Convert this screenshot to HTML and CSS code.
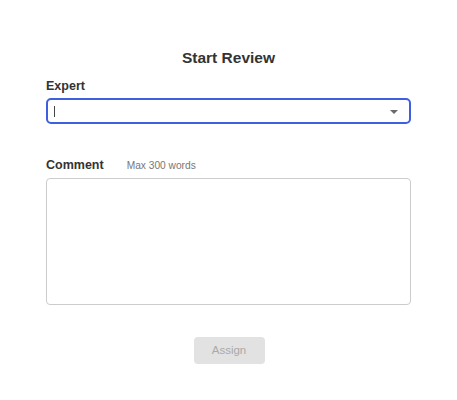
FILE: index.html
```html
<!DOCTYPE html>
<html lang="en">
<head>
<meta charset="utf-8">
<title>Start Review</title>
<link rel="stylesheet" href="styles.css">
</head>
<body>
<main class="dialog">
  <h1 class="title">Start Review</h1>
  <label class="label">Expert</label>
  <div class="select">
    <span class="cursor"></span>
    <svg class="caret" width="8" height="4" viewBox="0 0 8 4"><path d="M0 0 H8 L4 4 Z" fill="#6b6b6b"/></svg>
  </div>
  <div class="comment-row">
    <label class="label">Comment</label>
    <span class="hint">Max 300 words</span>
  </div>
  <div class="textarea"></div>
  <div class="actions">
    <button class="btn" disabled>Assign</button>
  </div>
</main>
</body>
</html>
```
FILE: styles.css
```css
html, body {
  margin: 0;
  padding: 0;
  background: #ffffff;
}
body {
  font-family: "Liberation Sans", Arial, sans-serif;
  color: #333333;
}
.dialog {
  display: flex;
  flex-direction: column;
  padding: 48px 46px 0 46px;
}
.title {
  margin: 0;
  font-size: 15.5px;
  line-height: 20px;
  font-weight: 700;
  text-align: center;
  color: #333333;
}
.label {
  display: block;
  font-size: 12.5px;
  line-height: 16px;
  font-weight: 700;
  color: #333333;
}
.dialog > .label {
  margin-top: 10px;
}
.select {
  margin-top: 4px;
  height: 26px;
  box-sizing: border-box;
  border: 2px solid #3f5fe0;
  border-radius: 5px;
  display: flex;
  align-items: center;
  justify-content: space-between;
  padding: 0 11px 0 6px;
}
.cursor {
  width: 1px;
  height: 11px;
  background: #444444;
}
.caret {
  display: block;
  margin-top: 1px;
}
.comment-row {
  margin-top: 33px;
  display: flex;
  align-items: baseline;
  gap: 23px;
}
.hint {
  font-size: 10.2px;
  color: #777777;
}
.textarea {
  margin-top: 5px;
  height: 127px;
  box-sizing: border-box;
  border: 1px solid #cccccc;
  border-radius: 4px;
}
.actions {
  display: flex;
  justify-content: center;
  margin-top: 32px;
}
.btn {
  width: 71px;
  height: 27px;
  border: none;
  border-radius: 4px;
  background: #e2e2e2;
  color: #a9a9a9;
  font-family: "Liberation Sans", Arial, sans-serif;
  font-size: 11.5px;
  padding: 0 0 1px 0;
  margin-left: 1px;
}
```
